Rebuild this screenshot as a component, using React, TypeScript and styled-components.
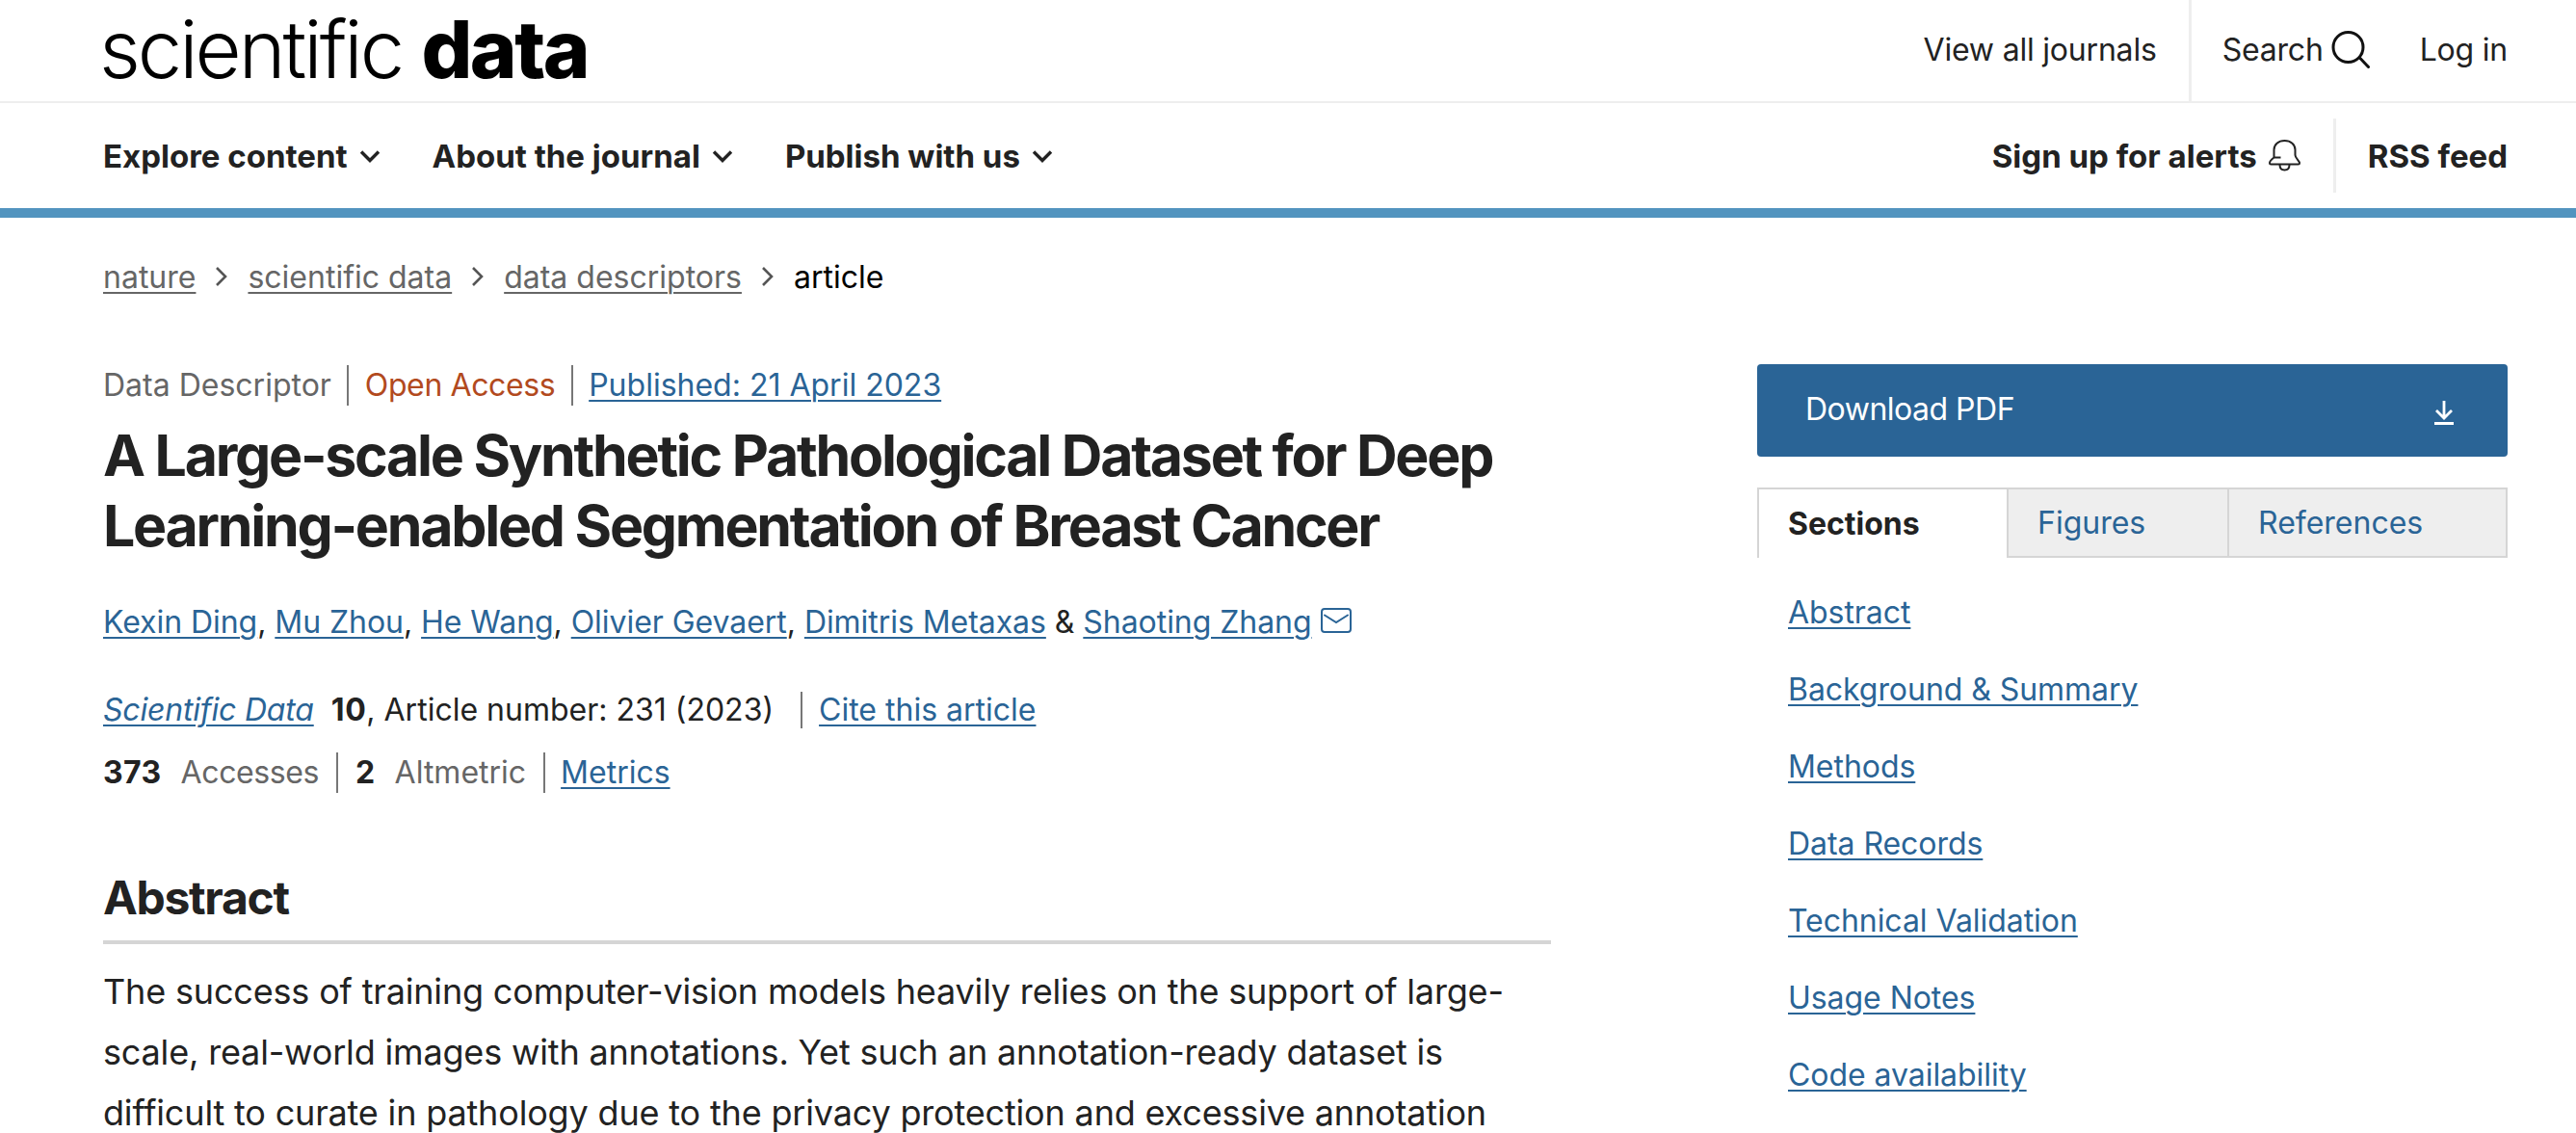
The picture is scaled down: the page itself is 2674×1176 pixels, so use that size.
import React from "react";
import styled, { createGlobalStyle } from "styled-components";

const GlobalStyle = createGlobalStyle`
  html, body {
    margin: 0;
    padding: 0;
    height: 1176px;
    overflow: hidden;
    background: #fff;
    font-family: Inter, "Liberation Sans", sans-serif;
    color: #222;
  }
  * { box-sizing: border-box; }
`;

const sections = [
  "Abstract",
  "Background & Summary",
  "Methods",
  "Data Records",
  "Technical Validation",
  "Usage Notes",
  "Code availability",
];

const Chevron = () => (
  <svg width="22" height="14" viewBox="0 0 22 14" fill="none">
    <path d="M2 2.5l9 9 9-9" stroke="#222" strokeWidth="3.4" />
  </svg>
);

const SearchIcon = () => (
  <svg width="40" height="39" viewBox="0 0 40 39" fill="none" stroke="#111" strokeWidth="3">
    <circle cx="17.5" cy="17" r="15.5" />
    <path d="M29.5 28l9 9.5" strokeLinecap="round" />
  </svg>
);

const BellIcon = () => (
  <svg width="33" height="33" viewBox="0 0 33 33" fill="none" stroke="#222" strokeWidth="2">
    <path d="M5.5 18v-7.5C5.5 5 10 1 16.5 1s11 4 11 9.5V16c0 3 4.500 6 4.500 8 0 1-.5 1.500-1.500 1.500h-28C1.500 25.500 1 25 1 24c0-2 2.500-4 4.500-5.500h7" />
    <path d="M11.500 26c0 3.500 2 5.500 5 5.500s5-2 5-5.500" />
  </svg>
);

const MailIcon = () => (
  <svg width="32" height="26" viewBox="0 0 32 26" fill="none" stroke="#2a6496" strokeWidth="2">
    <rect x="1" y="1" width="30" height="24" rx="3" />
    <path d="M4 7.500l12 7.500 12-7.500" strokeLinecap="round" />
  </svg>
);

const DownloadIcon = () => (
  <svg width="22" height="26" viewBox="0 0 22 26" fill="none" stroke="#fff" strokeWidth="2.8">
    <path d="M11 1v17M3 11l8 8 8-8" />
    <path d="M1 24.5h20" strokeWidth="3" />
  </svg>
);

const ArrowRight = () => (
  <svg width="14" height="22" viewBox="0 0 14 22" fill="none">
    <path d="M2 2l9 9-9 9" stroke="#555" strokeWidth="2.6" />
  </svg>
);

const App: React.FC = () => {
  return (
    <Page>
      <GlobalStyle />
      <TopBar>
        <Logo>
          scientific <b>data</b>
        </Logo>
        <TopLinks>
          <TopLink>View all journals</TopLink>
          <TopDivider />
          <TopLink>
            Search <SearchIcon />
          </TopLink>
          <LoginLink>Log in</LoginLink>
        </TopLinks>
      </TopBar>
      <NavBar>
        <NavGroup>
          <NavItem>
            Explore content <Chevron />
          </NavItem>
          <NavItem>
            About the journal <Chevron />
          </NavItem>
          <NavItem>
            Publish with us <Chevron />
          </NavItem>
        </NavGroup>
        <NavRight>
          <NavItem>
            Sign up for alerts <BellIcon />
          </NavItem>
          <NavDivider />
          <NavItem>RSS feed</NavItem>
        </NavRight>
      </NavBar>
      <Breadcrumbs>
        <CrumbLink>nature</CrumbLink>
        <ArrowRight />
        <CrumbLink>scientific data</CrumbLink>
        <ArrowRight />
        <CrumbLink>data descriptors</CrumbLink>
        <ArrowRight />
        <CrumbCurrent>article</CrumbCurrent>
      </Breadcrumbs>
      <Columns>
        <Main>
          <MetaRow>
            <MetaItem $color="#666">Data Descriptor</MetaItem>
            <MetaItem $color="#b24a1e" $tight>
              Open Access
            </MetaItem>
            <MetaItem>
              <Link>Published: 21 April 2023</Link>
            </MetaItem>
          </MetaRow>
          <Title>
            A Large-scale Synthetic Pathological Dataset for Deep
            <br />
            Learning-enabled Segmentation of Breast Cancer
          </Title>
          <Authors>
            <Link>Kexin Ding</Link>, <Link>Mu Zhou</Link>, <Link>He Wang</Link>,{" "}
            <Link>Olivier Gevaert</Link>, <Link>Dimitris Metaxas</Link> &amp;{" "}
            <Link>Shaoting Zhang</Link> <MailIcon />
          </Authors>
          <CiteRow>
            <ItalicLink>Scientific Data</ItalicLink>
            <Volume>10</Volume>, Article number: 231 (2023)
            <CiteLink>
              <Link>Cite this article</Link>
            </CiteLink>
          </CiteRow>
          <StatsRow>
            <MetaItem $color="#666" $tight>
              <StatNumber>373</StatNumber>Accesses
            </MetaItem>
            <MetaItem $color="#666">
              <StatNumber>2</StatNumber>Altmetric
            </MetaItem>
            <MetaItem>
              <Link>Metrics</Link>
            </MetaItem>
          </StatsRow>
          <SectionTitle>Abstract</SectionTitle>
          <Paragraph>
            The success of training computer-vision models heavily relies on the support of large-
            <br />
            scale, real-world images with annotations. Yet such an annotation-ready dataset is
            <br />
            difficult to curate in pathology due to the privacy protection and excessive annotation
          </Paragraph>
        </Main>
        <Sidebar>
          <DownloadButton>
            <span>Download PDF</span>
            <DownloadIcon />
          </DownloadButton>
          <Tabs>
            <Tab $active $width={261}>
              Sections
            </Tab>
            <Tab $width={229}>Figures</Tab>
            <Tab $width={289}>References</Tab>
          </Tabs>
          <SectionList>
            {sections.map((s) => (
              <li key={s}>
                <Link>{s}</Link>
              </li>
            ))}
          </SectionList>
        </Sidebar>
      </Columns>
    </Page>
  );
};

const Page = styled.div`
  width: 2674px;
  height: 1176px;
  overflow: hidden;
`;

const TopBar = styled.header`
  height: 107px;
  padding: 0 71px 0 107px;
  display: flex;
  align-items: center;
  justify-content: space-between;
  border-bottom: 2px solid #eee;
`;

const Logo = styled.div`
  font-size: 83px;
  font-weight: 300;
  letter-spacing: -3px;
  color: #000;
  line-height: 100px;
  margin-left: -4px;
  margin-bottom: 4px;
  b {
    font-weight: 800;
    letter-spacing: -2.5px;
  }
`;

const TopLinks = styled.div`
  display: flex;
  align-items: center;
  height: 105px;
`;

const TopLink = styled.span`
  display: flex;
  align-items: center;
  gap: 8px;
  font-size: 32px;
  letter-spacing: -0.2px;
  margin-bottom: 3px;
`;

const LoginLink = styled(TopLink)`
  margin-left: 52px;
`;

const TopDivider = styled.span`
  width: 3px;
  height: 105px;
  background: #eee;
  margin: 0 32px 0 33px;
`;

const NavBar = styled.nav`
  height: 119px;
  padding: 0 71px 0 107px;
  display: flex;
  align-items: center;
  justify-content: space-between;
  border-bottom: 10px solid #5294bf;
`;

const NavGroup = styled.div`
  display: flex;
  gap: 54px;
`;

const NavRight = styled.div`
  display: flex;
  align-items: center;
`;

const NavItem = styled.span`
  display: flex;
  align-items: center;
  gap: 12px;
  font-size: 33px;
  font-weight: 700;
  white-space: nowrap;
`;

const NavDivider = styled.span`
  width: 3px;
  height: 77px;
  background: #eee;
  margin: 0 33px 0 34px;
`;

const Breadcrumbs = styled.div`
  height: 122px;
  padding-left: 107px;
  display: flex;
  align-items: center;
  gap: 20px;
  font-size: 32px;
`;

const CrumbLink = styled.span`
  color: #666;
  text-decoration: underline;
  text-decoration-thickness: 2px;
  text-underline-offset: 4px;
`;

const CrumbCurrent = styled.span`
  color: #000;
`;

const Columns = styled.div`
  display: grid;
  grid-template-columns: 1503px 779px;
  column-gap: 214px;
  padding-left: 107px;
  padding-top: 31px;
`;

const Main = styled.main`
  display: flex;
  flex-direction: column;
`;

const MetaRow = styled.div`
  display: flex;
  height: 42px;
  align-items: center;
  font-size: 32px;
`;

const MetaItem = styled.span<{ $color?: string; $tight?: boolean }>`
  color: ${(p) => p.$color || "#2a6496"};
  padding: 0 16.5px;
  line-height: 42px;
  border-right: 2px solid #777;
  letter-spacing: ${(p) => (p.$tight ? "-0.4px" : "0")};
  &:first-child {
    padding-left: 0;
  }
  &:last-child {
    border-right: none;
  }
`;

const Link = styled.a`
  color: #2a6496;
  text-decoration: underline;
  text-decoration-thickness: 2px;
  text-underline-offset: 4px;
`;

const ItalicLink = styled(Link)`
  font-style: italic;
  margin-right: 18px;
  letter-spacing: -0.2px;
`;

const Title = styled.h1`
  margin: 15px 0 0;
  font-size: 59px;
  line-height: 73px;
  font-weight: 700;
  letter-spacing: -2.25px;
  color: #222;
`;

const Authors = styled.div`
  margin-top: 42px;
  font-size: 32px;
  line-height: 44px;
  letter-spacing: -0.05px;
  svg {
    vertical-align: 0;
    margin-left: 1px;
  }
`;

const CiteRow = styled.div`
  margin-top: 47px;
  display: flex;
  align-items: center;
  font-size: 32px;
  line-height: 44px;
  white-space: pre;
`;

const Volume = styled.b`
  font-weight: 700;
  color: #222;
  letter-spacing: 0.6px;
`;

const StatNumber = styled.b`
  font-weight: 700;
  color: #222;
  letter-spacing: 0.4px;
  margin-right: 20px;
`;

const CiteLink = styled.span`
  margin-left: 28px;
  padding-left: 17px;
  border-left: 2px solid #777;
  line-height: 38px;
`;

const StatsRow = styled(MetaRow)`
  margin-top: 22px;
  ${MetaItem} {
    padding: 0 18px;
  }
  ${MetaItem}:first-child {
    padding-left: 0;
  }
  ${MetaItem}:last-child {
    padding-left: 16px;
  }
`;

const SectionTitle = styled.h2`
  margin: 0;
  margin-top: 81px;
  padding-bottom: 16px;
  font-size: 48px;
  line-height: 56px;
  font-weight: 700;
  letter-spacing: -1.3px;
  border-bottom: 4px solid #d5d5d5;
`;

const Paragraph = styled.p`
  margin: 18px 0 0;
  font-size: 36px;
  letter-spacing: -0.17px;
  line-height: 63px;
  color: #222;
  white-space: nowrap;
`;

const Sidebar = styled.aside`
  display: flex;
  flex-direction: column;
  margin-top: -1px;
`;

const DownloadButton = styled.div`
  height: 96px;
  background: #2a6496;
  color: #fff;
  border-radius: 4px;
  font-size: 32px;
  letter-spacing: -0.5px;
  padding: 0 55px 0 50px;
  display: flex;
  align-items: center;
  justify-content: space-between;
  span {
    margin-bottom: 4px;
  }
  svg {
    margin-top: 4px;
  }
`;

const Tabs = styled.div`
  display: flex;
  margin-top: 32px;
  height: 73px;
`;

const Tab = styled.div<{ $active?: boolean; $width: number }>`
  width: ${(p) => p.$width}px;
  display: flex;
  align-items: center;
  padding-left: 30px;
  font-size: 32px;
  font-weight: ${(p) => (p.$active ? 700 : 400)};
  color: ${(p) => (p.$active ? "#222" : "#2a6496")};
  background: ${(p) => (p.$active ? "#fff" : "#eee")};
  border: 2px solid #d5d5d5;
  border-left-width: ${(p) => (p.$active ? 2 : 0)}px;
  border-bottom-width: ${(p) => (p.$active ? 0 : 2)}px;
`;

const SectionList = styled.ul`
  list-style: none;
  margin: 0;
  padding: 35px 0 0 32px;
  font-size: 32px;
  letter-spacing: -0.05px;
  li {
    height: 80px;
    line-height: 44px;
  }
`;

export default App;
